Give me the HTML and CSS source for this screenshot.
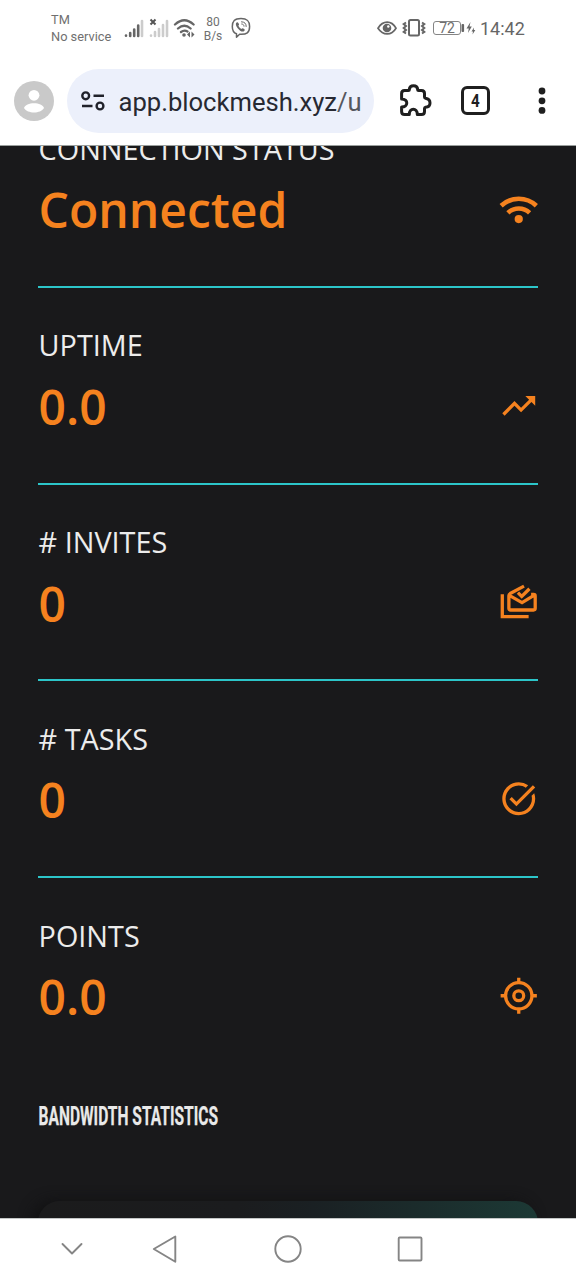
FILE: index.html
```html
<!DOCTYPE html>
<html lang="en">
<head>
<meta charset="utf-8">
<title>BlockMesh</title>
<link rel="stylesheet" href="styles.css">
</head>
<body>
<div class="screen">
  <header class="status">
    <div class="carrier"><span>TM</span><span>No service</span></div>
    <svg class="signals" width="72" height="22" viewBox="124 17 72 22" fill="none">
      <g stroke="#666" stroke-width="2.6" stroke-linecap="round"><path d="M126 35.5v.2M130.2 33v3M134.2 29.5v6.5M138.2 25.5v10.500"/><path d="M142 21v15" stroke="#ccc"/></g>
      <g stroke="#ccc" stroke-width="2.6" stroke-linecap="round"><path d="M151 35.500v.2M155 32v4M159 29v7M163 25v11M167 21v15"/></g>
      <path d="M150.500 19.500l5 5M155.500 19.500l-5 5" stroke="#555" stroke-width="2"/>
      <g stroke="#666" stroke-width="2.300" stroke-linecap="round"><path d="M175 24.500q9.300-8.500 18.600 0M178 28.500q6.300-5.500 12.600 0M181 32q3.300-2.500 6.500-.5"/></g>
      <circle cx="184" cy="35" r="1.800" fill="#666"/>
      <path d="M190 31.500v6l-3-3zM191.500 31.500v6l3-3z" fill="#666"/>
    </svg>
    <div class="rate"><span>80</span><span>B/s</span></div>
    <svg class="viber" width="20" height="22" viewBox="0 0 20 22" fill="none" stroke="#666" stroke-width="1.500" stroke-linecap="round" stroke-linejoin="round">
      <path d="M10 1.500C3.500 1.500 1.300 4 1.300 9.500c0 4 1.200 6.300 4.200 7.300v3.400l3.100-2.900c7.200.5 10-1.800 10-7.800 0-5.500-2.100-8-8.600-8z"/>
      <path d="M6 5.300c-2 1-1 3.700.7 5.900 1.800 2.300 4.300 4 5.900 3.200 1.500-.9 1.600-1.700.3-2.600-1.300-.9-1.700-.8-2.500.1-1.500-.5-2.600-1.700-3-3.300.9-.8.800-1.300.1-2.300-.5-.8-.9-1.200-1.500-1z" fill="#666" stroke="none"/>
      <path d="M10.500 4.800c3.200.1 4.700 1.700 4.700 4.700M10.700 7c1.500.1 2.200.8 2.300 2.200" stroke-width="1"/>
    </svg>
    <svg class="eye" width="50" height="20" viewBox="376 18 50 20" fill="none" stroke="#666">
      <path d="M378 28.200c5-8 13.500-8 18 0-4.500 7.600-13 7.600-18 0z" stroke-width="1.700"/>
      <circle cx="387" cy="28" r="4.300" fill="#666" stroke="none"/><circle cx="388.300" cy="26.500" r="1.200" fill="#fff" stroke="none"/>
      <rect x="409" y="20" width="10" height="15.500" rx="1.500" stroke-width="2"/>
      <path d="M406 22.500l-2.300 1.500 2.300 2-2.300 2 2.300 2-2.300 2 2.300 1.500M422 22.500l2.300 1.500-2.300 2 2.300 2-2.300 2 2.300 2-2.300 1.500" stroke-width="2"/>
    </svg>
    <div class="battery">72</div>
    <svg class="charge" width="16" height="16" viewBox="461 20 16 16" fill="#666"><rect x="461.500" y="24" width="2.600" height="8" rx="1"/><path d="M470.500 22l-4 6.500h2.300l-.8 4.500 3.800-6.500h-2.300zM474 27.500l-2.500 4h1.500l-.5 3 2.800-4.500h-1.500z"/></svg>
    <time class="clock">14:42</time>
  </header>

  <nav class="browser">
    <svg class="avatar" width="40" height="40" viewBox="0 0 40 40"><circle cx="20" cy="20" r="20" fill="#c9c9c9"/><circle cx="20" cy="14.300" r="5.400" fill="#fff"/><path d="M10 27c1.500-6.500 18.500-6.500 20 0-3.500 6-16.500 6-20 0z" fill="#fff"/></svg>
    <div class="address">
      <svg width="26" height="22" viewBox="80 90 26 22" fill="none" stroke="#20222a" stroke-width="2.400"><circle cx="85.700" cy="95.800" r="3.400"/><path d="M93.500 95.800H104M82 106h10.500"/><circle cx="100" cy="106" r="3.400"/></svg>
      <span class="url">app.blockmesh.xyz<span class="path">/u</span></span>
    </div>
    <svg class="puzzle" width="34" height="34" viewBox="399 84 34 34" fill="none" stroke="#1f1f1f" stroke-width="3" stroke-linejoin="round"><path d="M404.500 90.500H408.300Q409.300 90.500 409.300 89.500C409.800 84.500 417.200 84.500 417.700 89.500Q417.700 90.500 418.700 90.500H421.500Q424.500 90.500 424.500 93.500V97Q424.500 98 425.500 98.200C431.500 99.200 431.500 106.800 425.500 107.300Q424.500 107.500 424.500 108.500V111.500Q424.500 114.500 421.500 114.500H417.300C417.300 107.500 409.300 107.500 409.300 114.500H404.600Q401.600 114.500 401.600 111.500V107C408.500 107 408.500 99 401.600 99V93.500Q401.600 90.500 404.500 90.500Z"/></svg>
    <div class="tabs"><span>4</span></div>
    <svg class="more" width="8" height="28" viewBox="0 0 8 28" fill="#1f1f1f"><circle cx="4" cy="4" r="3.400"/><circle cx="4" cy="13.800" r="3.400"/><circle cx="4" cy="23.400" r="3.400"/></svg>
  </nav>

  <main class="page">
    <section class="stat">
      <h2>CONNECTION STATUS</h2>
      <div class="row"><strong>Connected</strong>
        <svg class="icon" viewBox="0 0 24 24" fill="none" stroke="#f5821f" stroke-width="2.800"><path d="M1.300 10.200a15.600 15.600 0 0 1 21.400 0M5.400 14.500a9.500 9.500 0 0 1 13.200 0"/><circle cx="12" cy="18.300" r="2.500" fill="#f5821f" stroke="none"/></svg></div>
    </section>
    <section class="stat">
      <h2>UPTIME</h2>
      <div class="row"><strong>0.0</strong>
        <svg class="icon" viewBox="0 0 24 24" fill="#f5821f"><path d="M16 6l2.290 2.290-4.880 4.880-4-4L2 16.590 3.410 18l6-6 4 4 6.300-6.290L22 12V6z"/></svg></div>
    </section>
    <section class="stat">
      <h2># INVITES</h2>
      <div class="row"><strong>0</strong>
        <svg class="icon" viewBox="0 0 24 24" fill="none" stroke="#f5821f" stroke-width="2"><path d="M2 7.500V21h16"/><path d="M15.200 2.500L6.800 7Q6 7.500 6 8.300V16q0 1 1 1h14q1 0 1-1V8.500q0-1-1-1h-1.500M6.500 8.300L14 12.500l7.500-4.500"/><path d="M11.500 6.500l2.300 2.300 4.700-4.700"/></svg></div>
    </section>
    <section class="stat">
      <h2># TASKS</h2>
      <div class="row"><strong>0</strong>
        <svg class="icon" viewBox="0 0 24 24" fill="#f5821f"><path d="M22 5.180L10.590 16.600l-4.240-4.240 1.410-1.410 2.830 2.830 10-10L22 5.180zM12 20c-4.410 0-8-3.590-8-8s3.590-8 8-8c1.570 0 3.040.46 4.280 1.250l1.450-1.450A10.020 10.020 0 0 0 12 2C6.480 2 2 6.480 2 12s4.480 10 10 10 10-4.480 10-10c0-1.190-.22-2.330-.6-3.390l-1.610 1.610c.14.57.21 1.170.21 1.780 0 4.410-3.590 8-8 8z"/></svg></div>
    </section>
    <section class="stat last">
      <h2>POINTS</h2>
      <div class="row"><strong>0.0</strong>
        <svg class="icon" viewBox="0 0 24 24" fill="none" stroke="#f5821f" stroke-width="2"><circle cx="12" cy="12" r="8"/><circle cx="12" cy="12" r="3"/><path d="M12 1v3M12 20v3M1 12h3M20 12h3"/></svg></div>
    </section>
    <svg class="heading" width="190" height="36" viewBox="0 0 190 36"><text x="0.5" y="27" textLength="179.500" lengthAdjust="spacingAndGlyphs">BANDWIDTH STATISTICS</text></svg>
    <div class="card"></div>
  </main>

  <footer class="nav">
    <svg width="576" height="61" viewBox="0 1219 576 61" fill="none" stroke="#858585" stroke-width="1.900" stroke-linejoin="round" stroke-linecap="round"><path d="M62.500 1244l9.500 9.500 9.500-9.500M175.300 1236.500v25.200L153.800 1249z"/><circle cx="288" cy="1249" r="12.700"/><rect x="398.700" y="1237.500" width="22.800" height="23" rx="1"/></svg>
  </footer>
</div>
</body>
</html>
```
FILE: styles.css
```css
* { box-sizing: border-box; }
body { margin: 0; background: #fff; font-family: Roboto, "Liberation Sans", sans-serif; }
svg { display: block; flex: none; }
.screen { width: 576px; height: 1280px; display: flex; flex-direction: column; overflow: hidden; }
.status { height: 56px; flex: none; display: flex; align-items: center; color: #707070; white-space: nowrap; }
.carrier { width: 73px; margin-left: 51px; display: flex; flex-direction: column; font-size: 12.800px; line-height: 17.500px; }
.rate { width: 26px; margin-left: 4px; display: flex; flex-direction: column; align-items: center; font-size: 12px; line-height: 14px; padding-top: 1px; }
.viber { margin-left: 5px; }
.eye { margin-left: 125px; }
.battery { width: 28px; height: 14px; margin-left: 7px; border: 1px solid #858585; border-radius: 3px; font-size: 14px; line-height: 13px; text-align: center; }
.charge { width: 16px; }
.clock { margin-left: 3px; font-size: 18px; color: #666; }
.browser { height: 90px; flex: none; display: flex; align-items: center; padding-left: 14px; border-bottom: 1px solid #9a9f9d; }
.address { width: 307px; height: 64px; margin-left: 13px; padding-left: 13px; border-radius: 32px; background: #ecf0fb; display: flex; align-items: center; }
.url { margin-left: 12.500px; padding-top: 2px; font-size: 25.600px; color: #272932; white-space: nowrap; }
.path { color: #55575f; }
.puzzle { margin-left: 25px; }
.tabs { width: 29px; height: 29px; margin-left: 28px; border: 3px solid #1f1f1f; border-radius: 6px; font-size: 19px; font-weight: 700; line-height: 24px; text-align: center; color: #1f1f1f; }
.tabs span { display: inline-block; transform: scaleX(.8); }
.more { margin-left: 48px; }
.page { height: 1072px; flex: none; overflow: hidden; background: #19191b; padding: 0 38px; font-family: "Open Sans", "Noto Sans", sans-serif; }
.stat { height: 196.800px; padding-top: 37.600px; border-bottom: 2px solid #2cc5c9; }
.stat:first-child { margin-top: -55px; }
.stat.last { border-bottom: 0; }
.stat h2 { margin: 0 0 7.400px .6px; font-size: 28.800px; line-height: 40px; font-weight: 400; color: #ececec; }
.row { height: 66px; display: flex; justify-content: space-between; align-items: center; }
.row strong { margin-left: .6px; padding-top: 2px; font-size: 48px; line-height: 66px; font-weight: 600; color: #f5821f; }
.icon { width: 39.500px; height: 39.500px; margin-top: -1px; }
.heading { margin-top: 23px; }
.heading text { font-family: Roboto, sans-serif; font-size: 26px; font-weight: 700; fill: #e9e9e9; stroke: #e9e9e9; stroke-width: .25px; }
.card { width: 500px; height: 200px; margin-top: 67px; border-radius: 22px; background: linear-gradient(90deg, #1b1b1c 0%, #1b1c1e 40%, #1a2023 55%, #1b2b2b 75%, #1c3935 100%); box-shadow: -6px 0 14px #111112; }
.nav { height: 62px; flex: none; border-top: 1px solid #c4c7c7; background: #fff; }
```
